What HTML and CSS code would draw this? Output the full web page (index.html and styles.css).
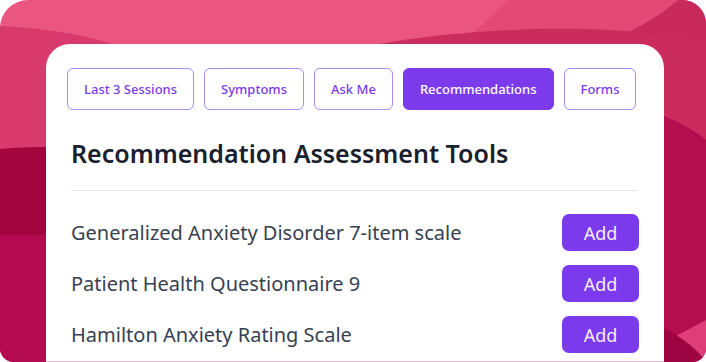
FILE: index.html
```html
<!DOCTYPE html>
<html lang="en">

<head>
    <meta charset="UTF-8">
    <title>Recommendation Assessment Tools</title>
    <link rel="stylesheet" href="styles.css">
</head>

<body>
    <div class="frame">
        <!-- background waves -->
        <svg class="waves" viewBox="0 0 706 362" preserveAspectRatio="none">
            <rect width="706" height="362" fill="#ea5680" />
            <path d="M508 0 C494 14 482 26 466 40 L706 40 L706 0 Z" fill="#e34876" />
            <path d="M678 0 C662 14 642 27 614 38 L706 48 L706 0 Z" fill="#c92a5c" />
            <path d="M0 26 C45 28 85 35 112 44 L112 362 L0 362 Z" fill="#d83a6d" />
            <path d="M380 44 C470 28 620 20 706 44 L706 362 L380 362 Z" fill="#cb2c5e" />
            <path d="M0 149 C20 147 40 147 60 147 L60 235 L0 235 Z" fill="#a3063f" />
            <path d="M0 235 L60 235 L60 362 L0 362 Z" fill="#b30a50" />
            <path d="M650 110 C675 120 695 130 706 140 L706 362 L650 362 Z" fill="#b50e4e" />
            <path d="M672 338 L706 320 L706 362 L690 362 Z" fill="#df3d78" />
            <path d="M650 322 C675 332 694 345 706 362 L650 362 Z" fill="#9c0541" />
        </svg>

        <div class="card">
            <nav class="tabs">
                <a class="tab">Last 3 Sessions</a>
                <a class="tab">Symptoms</a>
                <a class="tab">Ask Me</a>
                <a class="tab active">Recommendations</a>
                <a class="tab">Forms</a>
            </nav>

            <div class="section">
                <h2>Recommendation Assessment Tools</h2>
                <ul class="tools">
                    <li>
                        <span>Generalized Anxiety Disorder 7-item scale</span>
                        <button class="add">Add</button>
                    </li>
                    <li>
                        <span>Patient Health Questionnaire 9</span>
                        <button class="add">Add</button>
                    </li>
                    <li>
                        <span>Hamilton Anxiety Rating Scale</span>
                        <button class="add">Add</button>
                    </li>
                </ul>
            </div>
        </div>
    </div>
</body>

</html>
```

FILE: styles.css
```css
html,
body {
    margin: 0;
    padding: 0;
    background: #fff;
    font-family: "Noto Sans", "Open Sans", sans-serif;
}

.frame {
    position: relative;
    width: 706px;
    height: 362px;
    border-radius: 28px 24px 14px 14px;
    overflow: hidden;
}

.waves {
    position: absolute;
    top: 0;
    left: 0;
    width: 100%;
    height: 100%;
}

.card {
    position: relative;
    box-sizing: border-box;
    height: 318px;
    margin: 44px 42px 0 46px;
    padding: 24px 26px 0 21px;
    background: #fff;
    border-radius: 24px 24px 0 0;
    border-bottom: 1px solid #f0b8cc;
}

.tabs {
    display: flex;
    gap: 10px;
}

.tab {
    box-sizing: border-box;
    height: 42px;
    line-height: 40px;
    padding: 0 16px;
    border: 1px solid #a98af7;
    border-radius: 6px;
    color: #7c3aed;
    font-size: 13px;
    font-weight: 500;
    white-space: nowrap;
}

.tab.active {
    background: #7c3aed;
    border-color: #7c3aed;
    color: #fff;
}

.section {
    padding-left: 4px;
}

h2 {
    margin: 0;
    padding: 26px 0 20px;
    font-size: 25px;
    font-weight: 600;
    color: #1a202c;
    border-bottom: 1px solid #e5e7eb;
}

.tools {
    list-style: none;
    margin: 0;
    padding: 23px 0 0;
}

.tools li {
    display: flex;
    align-items: center;
    justify-content: space-between;
    height: 37px;
    margin-bottom: 14px;
    font-size: 20px;
    color: #374151;
}

.add {
    width: 77px;
    height: 37px;
    margin-right: -1px;
    border: 0;
    border-radius: 7px;
    background: #7c3aed;
    color: #f3ecff;
    font-family: inherit;
    font-size: 18px;
}
```
